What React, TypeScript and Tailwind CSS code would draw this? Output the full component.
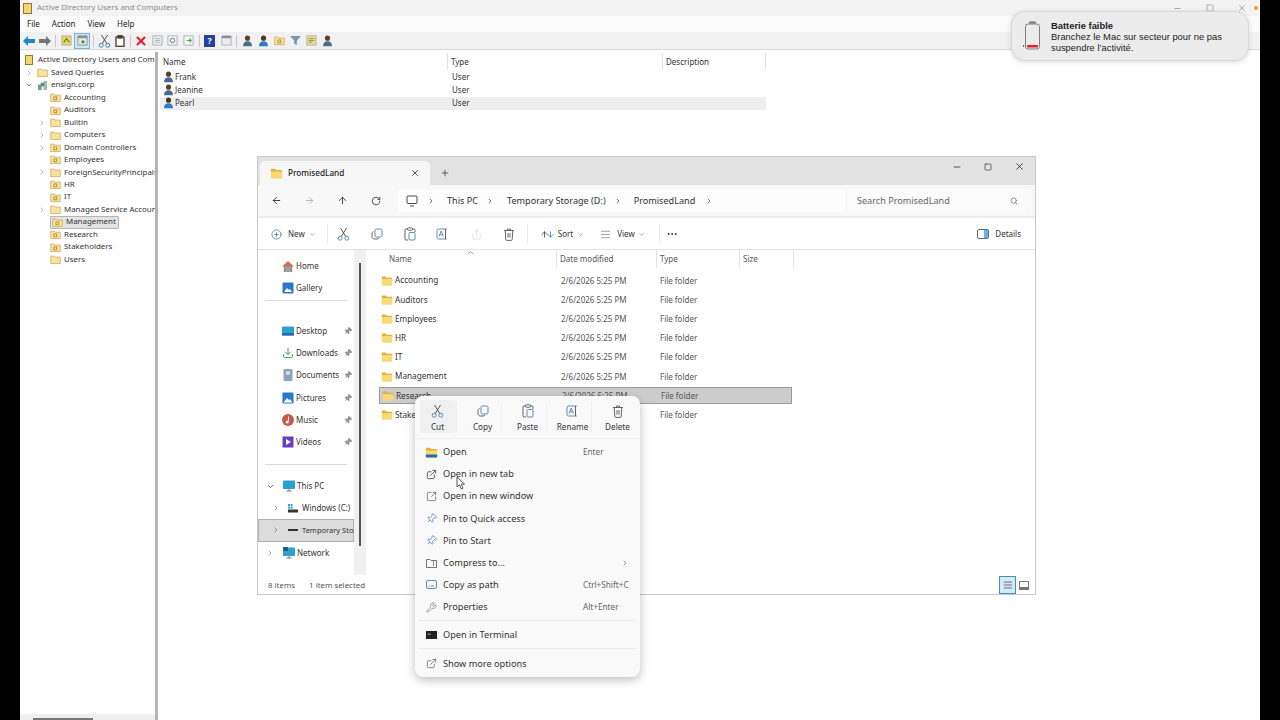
import { ReactNode } from "react";
import {
  ArrowDown,
  ArrowLeft,
  ArrowRight,
  ArrowUp,
  ChevronDown,
  ChevronRight,
  ChevronUp,
  Download,
  Minus,
  MoreHorizontal,
  Pin,
  Plus,
  CirclePlus,
  RotateCw,
  Search,
  Share,
  Square,
  SquareArrowOutUpRight,
  ExternalLink,
  Wrench,
  X,
  AlignJustify,
} from "lucide-react";

const SANS = "font-['Noto_Sans','Open_Sans',sans-serif]";

function Folder({ size = 12, blue }: { size?: number; blue?: boolean }) {
  return (
    <svg width={size} height={size} viewBox="0 0 16 16" className="shrink-0">
      <path d="M1 3.5C1 2.7 1.6 2 2.4 2h3.8l1.6 1.6h5.800c.8 0 1.400.6 1.400 1.400v1H1z" fill="#e0b13c" />
      <path d="M1 5.600h14v7.200c0 .8-.6 1.400-1.400 1.400H2.400c-.8 0-1.400-.6-1.400-1.400z" fill="#f9d976" />
      {blue && <path d="M1 10.500h14v2.300c0 .8-.6 1.400-1.400 1.400H2.400c-.8 0-1.400-.6-1.400-1.400z" fill="#1d6fa8" />}
    </svg>
  );
}

function CutIcon({ color = "#4f7fb5" }: { color?: string }) {
  return (
    <svg width="13" height="14" viewBox="0 0 13 14" fill="none" stroke={color} strokeWidth="0.9" className="shrink-0">
      <circle cx="3.200" cy="11.200" r="2" />
      <circle cx="9.800" cy="11.200" r="2" />
      <path d="M4.300 9.500L9.500 1M8.700 9.500L3.500 1" stroke="#444" />
    </svg>
  );
}

function CopyIcon() {
  return (
    <svg width="12" height="12" viewBox="0 0 12 12" fill="none" strokeWidth="0.9" className="shrink-0">
      <rect x="4" y="1" width="7" height="8" rx="1.500" stroke="#4f7fb5" />
      <path d="M2.500 3.500C1.500 4 1 4.500 1 5.500v3C1 10 2 11 3.500 11h2.500c1 0 1.500-.5 2-1.200" stroke="#555" />
    </svg>
  );
}

function PasteIcon() {
  return (
    <svg width="12" height="14" viewBox="0 0 12 14" fill="none" strokeWidth="0.9" className="shrink-0">
      <path d="M3.500 2H2a1 1 0 00-1 1v9a1 1 0 001 1h2M8.500 2H10a1 1 0 011 1v2" stroke="#555" />
      <rect x="3.500" y="0.800" width="5" height="2.400" rx="0.800" stroke="#555" />
      <rect x="5" y="5.500" width="6" height="7.500" rx="1" stroke="#4f7fb5" />
    </svg>
  );
}

function RenameIcon() {
  return (
    <svg width="13" height="12" viewBox="0 0 13 12" fill="none" strokeWidth="0.9" className="shrink-0">
      <path d="M8 1H2.500A1.500 1.500 0 001 2.500v7A1.500 1.500 0 002.500 11H8" stroke="#4f7fb5" />
      <path d="M3 8.500L5.200 3l2.200 5.500M3.800 6.800h2.800" stroke="#4f7fb5" />
      <path d="M9.500 1v10M8.300 1h2.400M8.300 11h2.400" stroke="#555" />
    </svg>
  );
}

function TrashIcon() {
  return (
    <svg width="12" height="13" viewBox="0 0 12 13" fill="none" stroke="#555" strokeWidth="0.9" className="shrink-0">
      <path d="M1 2.500h10M4.500 2.500V1h3v1.500M2.200 2.500l.6 9a1 1 0 001 .9h4.400a1 1 0 001-.9l.6-9M5 5v4.500M7 5v4.500" />
    </svg>
  );
}

function OuFolder({ plain }: { plain?: boolean }) {
  return (
    <svg width="11" height="11" viewBox="0 0 16 16" className="shrink-0">
      <path d="M1 3h5l1.500 1.500H15V14H1z" fill="#f6e3a1" stroke="#c8a552" strokeWidth="1" />
      {!plain && <rect x="5" y="6.500" width="5.500" height="5.500" fill="#b9922e" />}
      {!plain && <rect x="6.500" y="8" width="2.500" height="2.500" fill="#f8efc8" />}
    </svg>
  );
}

function UserIcon({ blue }: { blue?: boolean }) {
  return (
    <svg width="11" height="12" viewBox="0 0 14 16" className="shrink-0">
      <circle cx="7" cy="4.200" r="3.400" fill={blue ? "#49361f" : "#5a4028"} />
      <path d="M1 15c0-4.400 2.400-6.600 6-6.600s6 2.200 6 6.600z" fill={blue ? "#2f7cc4" : "#4a6a90"} />
    </svg>
  );
}

function TreeRow({
  label,
  depth = 1,
  chevron,
  open,
  selected,
  plain,
  icon,
}: {
  label: string;
  depth?: number;
  chevron?: boolean;
  open?: boolean;
  selected?: boolean;
  plain?: boolean;
  icon?: ReactNode;
}) {
  return (
    <div className="flex h-[12.47px] items-center whitespace-nowrap">
      <span className={depth === 1 ? "w-[17px] shrink-0" : "w-[4px] shrink-0"} />
      <span className="flex w-[10px] shrink-0 items-center justify-center">
        {chevron && (open ? <ChevronDown size={8} strokeWidth={1.5} /> : <ChevronRight size={8} className="text-gray-500" strokeWidth={1.5} />)}
      </span>
      <span className={`ml-[3px] flex items-center gap-[3px] ${selected ? "-mx-[2px] h-[13.500px] rounded-[1px] border border-[#b5b5b5] bg-[#e3e3e3] pl-[1px] pr-[2px]" : ""}`}>
        {icon ?? <OuFolder plain={plain} />}
        <span className="text-[7.900px] text-[#333]">{label}</span>
      </span>
    </div>
  );
}

function MmcToolbar() {
  const sep = <span className="mx-[2.500px] h-[12px] w-px bg-[#c8c8c8]" />;
  const box = (c: string, inner?: ReactNode) => (
    <span className="flex h-[16px] w-[15.600px] items-center justify-center">
      <svg width="11" height="11" viewBox="0 0 12 12">
        <rect x="1" y="1" width="10" height="10" fill={c} stroke="#9aa3ad" strokeWidth="0.8" />
        {inner}
      </svg>
    </span>
  );
  return (
    <div className="flex h-[18px] items-center border-b border-[#d8d8d8] bg-[#f1f1f1] pl-[1.500px]">
      <span className="flex w-[15.600px] justify-center">
        <svg width="12" height="10" viewBox="0 0 12 10"><path d="M0 5l5-5v3h7v4H5v3z" fill="#1f88c9" /></svg>
      </span>
      <span className="flex w-[15.600px] justify-center">
        <svg width="12" height="10" viewBox="0 0 12 10"><path d="M12 5L7 0v3H0v4h7v3z" fill="#757575" /></svg>
      </span>
      {sep}
      {box("#f2d35f", <path d="M3 8l3-4 3 4" stroke="#4a9a3a" strokeWidth="1.400" fill="none" />)}
      <span className="flex h-[16px] w-[16px] items-center justify-center border border-[#7fb2d8] bg-[#cfe6f7]">
        <svg width="11" height="11" viewBox="0 0 12 12">
          <rect x="1" y="1" width="10" height="10" fill="#e8e8e8" stroke="#8a8f94" />
          <rect x="1" y="1" width="10" height="2.500" fill="#8a8f94" />
          <rect x="5" y="6" width="3" height="3" fill="#3d8a3d" />
        </svg>
      </span>
      {sep}
      <span className="flex w-[15.600px] justify-center"><CutIcon color="#2f74c0" /></span>
      <span className="flex w-[15.600px] justify-center">
        <svg width="10" height="12" viewBox="0 0 10 12" fill="#fff" stroke="#4a3f2a" strokeWidth="1.300">
          <rect x="1" y="2" width="8" height="9.300" />
          <rect x="3" y="0.700" width="4" height="2.300" fill="#4a3f2a" />
        </svg>
      </span>
      {sep}
      <span className="flex w-[16px] justify-center"><X size={14} className="text-[#d8262c]" strokeWidth={3.600} /></span>
      {box("#eceff2", <path d="M3 4h6M3 6h6M3 8h6" stroke="#9aa3ad" strokeWidth="0.8" />)}
      {box("#f4f4f4", <circle cx="6" cy="6" r="2.400" stroke="#707070" fill="none" />)}
      {box("#f6f6f6", <path d="M4 6h5M7 4l2 2-2 2" stroke="#58a63c" strokeWidth="1.200" fill="none" />)}
      {sep}
      <span className="ml-[2px] mr-[3px] flex h-[12px] w-[11px] items-center justify-center bg-[#26409b] text-[9px] font-bold leading-none text-white">?</span>
      {box("#ececec", <rect x="1" y="1" width="10" height="2.500" fill="#8a8f94" />)}
      {sep}
      <span className="flex w-[16px] justify-center"><UserIcon /></span>
      <span className="flex w-[16px] justify-center"><UserIcon blue /></span>
      <span className="flex w-[16px] justify-center"><OuFolder /></span>
      <span className="flex w-[16px] justify-center">
        <svg width="11" height="11" viewBox="0 0 12 12"><path d="M0 1h12L7.500 6v5l-3-1.500V6z" fill="#7c97ae" /></svg>
      </span>
      {box("#f2dc8f", <path d="M3 4h6M3 6h6M3 8h4" stroke="#7c8a3a" strokeWidth="0.9" />)}
      <span className="flex w-[16px] justify-center"><UserIcon /></span>
    </div>
  );
}

function MmcWindow() {
  return (
    <div className="flex h-full flex-col bg-white">
      <div className="flex h-4 shrink-0 items-center bg-[#f3f3f3] pl-[3px] pr-[2px]">
        <span className="h-[11px] w-[9px] border border-[#8f7a3a] bg-[#f3d66e]" />
        <span className="ml-[5px] text-[7.900px] text-[#8b8b8b]">Active Directory Users and Computers</span>
        <div className="ml-auto flex items-center text-[#9a9a9a]">
          <Minus size={9} />
          <Square size={8} className="ml-[24px]" />
          <X size={10} className="ml-[23px]" />
          <span className="ml-[7px] h-[4px] w-[4px] rounded-full bg-[#f0a030]" />
        </div>
      </div>
      <div className="flex h-4 shrink-0 items-center gap-[12px] bg-[#fbfbfb] pl-[7px] text-[8px] text-[#222]">
        <span>File</span><span>Action</span><span>View</span><span>Help</span>
      </div>
      <MmcToolbar />
      <div className="flex min-h-0 flex-1 pt-[2px]">
        <div className="flex w-[135px] shrink-0 flex-col overflow-hidden">
          <div className="flex-1 overflow-hidden pt-[2px]">
            <div className="flex h-[12.470px] items-center whitespace-nowrap pl-[5px]">
              <span className="mr-[5px] h-[10px] w-[8px] shrink-0 border border-[#8f7a3a] bg-[#f3d66e]" />
              <span className="text-[7.900px] text-[#333]">Active Directory Users and Com</span>
            </div>
            <TreeRow depth={0} chevron plain label="Saved Queries" />
            <TreeRow
              depth={0}
              chevron
              open
              label="ensign.corp"
              icon={
                <svg width="11" height="11" viewBox="0 0 12 12" className="shrink-0">
                  <rect x="1" y="5" width="4" height="6" fill="#7d9a8a" />
                  <rect x="7" y="1" width="4" height="10" fill="#a9bcb2" />
                  <rect x="4" y="3" width="4" height="4" fill="#5f8f70" />
                </svg>
              }
            />
            <TreeRow label="Accounting" />
            <TreeRow label="Auditors" />
            <TreeRow chevron plain label="Builtin" />
            <TreeRow chevron plain label="Computers" />
            <TreeRow chevron label="Domain Controllers" />
            <TreeRow label="Employees" />
            <TreeRow chevron plain label="ForeignSecurityPrincipals" />
            <TreeRow label="HR" />
            <TreeRow label="IT" />
            <TreeRow chevron plain label="Managed Service Accounts" />
            <TreeRow selected label="Management" />
            <TreeRow label="Research" />
            <TreeRow label="Stakeholders" />
            <TreeRow plain label="Users" />
          </div>
          <div className="flex h-[6px] shrink-0 items-end bg-[#efefef] pl-[13px]">
            <span className="h-[2px] w-[60px] bg-[#777]" />
          </div>
        </div>
        <div className="w-[3px] shrink-0 bg-[#b4b4b4]" />
        <div className="min-w-0 flex-1 pl-[2px]">
          <div className="flex h-[18px] w-[608px] items-center text-[8px] text-[#333]">
            <span className="w-[288px] border-r border-[#e2e2e2] pl-[3px] leading-[17px]">Name</span>
            <span className="w-[215px] border-r border-[#e2e2e2] pl-[3px] leading-[17px]">Type</span>
            <span className="w-[103px] border-r border-[#e2e2e2] pl-[3px] leading-[17px]">Description</span>
          </div>
          {[
            { name: "Frank" },
            { name: "Jeanine" },
            { name: "Pearl", sel: true },
          ].map((r) => (
            <div key={r.name} className={`flex h-[13.300px] w-[606px] items-center text-[8px] text-[#333] ${r.sel ? "bg-[#eeeeee]" : ""}`}>
              <span className="flex w-[288px] items-center gap-[1px] pl-[3px]">
                <UserIcon blue={r.sel} />
                {r.name}
              </span>
              <span className="pl-[4px]">User</span>
            </div>
          ))}
        </div>
      </div>
    </div>
  );
}

function NavIcon({ kind }: { kind: string }) {
  if (kind === "Downloads") return <Download size={12} className="text-[#2fa84f]" />;
  return (
    <svg width="12" height="12" viewBox="0 0 12 12" className="shrink-0">
      {kind === "Gallery" && (
        <>
          <rect x="0.500" y="0.500" width="11" height="11" rx="1" fill="#2a78c8" />
          <path d="M2 10l3-4 2 2 1-1 2 3z" fill="#fff" />
        </>
      )}
      {kind === "Desktop" && (
        <>
          <rect x="0" y="1.500" width="12" height="9" rx="0.800" fill="#2f9fd0" />
          <rect x="0" y="8" width="12" height="2.500" fill="#1c6f9f" />
        </>
      )}
      {kind === "Documents" && (
        <>
          <rect x="1.500" y="0" width="9" height="12" rx="0.800" fill="#8fa3b8" />
          <rect x="4" y="2.500" width="4" height="3" fill="#dfe6ee" />
        </>
      )}
      {kind === "Pictures" && (
        <>
          <rect x="0.500" y="0.500" width="11" height="11" rx="0.800" fill="#2a78c8" />
          <path d="M1.500 10.500l3.500-4.500 2 2 1-1 2.500 3.500z" fill="#fff" />
        </>
      )}
      {kind === "Music" && (
        <>
          <circle cx="6" cy="6" r="6" fill="#c8564a" />
          <path d="M6.500 2.500v5" stroke="#fff" strokeWidth="1" />
          <circle cx="5.200" cy="8" r="1.500" fill="#fff" />
        </>
      )}
      {kind === "Videos" && (
        <>
          <rect x="0.500" y="0.500" width="11" height="11" fill="#6a3cc0" />
          <path d="M4 3l5 3-5 3z" fill="#fff" />
        </>
      )}
      {(kind === "PC" || kind === "Network") && (
        <>
          <rect x="0" y="0.500" width="12" height="8.500" rx="0.800" fill="#2f9fd0" />
          <path d="M3.500 11h5M6 9v2" stroke="#777" strokeWidth="1" />
          {kind === "Network" && <rect x="0" y="0" width="5" height="4" fill="#1c5f8f" />}
        </>
      )}
    </svg>
  );
}

function NavRow({ children, pl, sel }: { children: ReactNode; pl: number; sel?: boolean }) {
  return (
    <div
      className={`flex h-[22.200px] items-center whitespace-nowrap text-[8px] text-[#333] ${sel ? "border border-[#b0b0b0] bg-[#dcdcdc]" : ""}`}
      style={{ paddingLeft: pl }}
    >
      {children}
    </div>
  );
}

const files = ["Accounting", "Auditors", "Employees", "HR", "IT", "Management", "Research", "Stakeholders"];
const pinned = ["Desktop", "Downloads", "Documents", "Pictures", "Music", "Videos"];

function Explorer() {
  return (
    <div className={`absolute left-[257px] top-[156px] flex h-[439px] w-[779px] flex-col border border-[#c8c8c8] bg-white ${SANS}`}>
      {/* tabs */}
      <div className="flex h-[28px] shrink-0 items-end bg-[#e3e3e3] pl-[2px]">
        <div className="flex h-[24px] w-[170px] items-center rounded-t-[5px] bg-[#f7f7f7] pl-[10px]">
          <Folder size={13} />
          <span className="ml-[5px] text-[8.200px] font-medium text-[#222]">PromisedLand</span>
          <X size={10} className="ml-auto mr-[10px] text-[#333]" />
        </div>
        <Plus size={10} className="mb-[7px] ml-[10px] text-[#444]" />
        <div className="mb-[13px] ml-auto flex items-center text-[#333]">
          <Minus size={10} />
          <Square size={8} className="ml-[22px]" />
          <X size={11} className="ml-[22px] mr-[10px]" />
        </div>
      </div>
      {/* address row */}
      <div className="flex h-[33px] shrink-0 items-center border-b-2 border-[#ececec] bg-[#f8f8f8] text-[9.100px] text-[#333]">
        <ArrowLeft size={11} className="ml-[13px]" />
        <ArrowRight size={11} className="ml-[22px] text-[#b5b5b5]" />
        <ArrowUp size={11} className="ml-[22px]" />
        <RotateCw size={10} className="ml-[23px]" />
        <div className="ml-[17px] flex h-[22px] w-[447px] items-center bg-[#fdfdfd] pl-[8px]">
          <svg width="12" height="12" viewBox="0 0 12 12" fill="none" stroke="#333" strokeWidth="0.9">
            <rect x="1" y="1" width="10" height="7.500" rx="1" />
            <path d="M4 11h4" />
          </svg>
          <ChevronRight size={8} className="ml-[9px]" />
          <span className="ml-[12px]">This PC</span>
          <ChevronRight size={8} className="ml-[8px]" />
          <span className="ml-[13px]">Temporary Storage (D:)</span>
          <ChevronRight size={8} className="ml-[8px]" />
          <span className="ml-[12px]">PromisedLand</span>
          <ChevronRight size={8} className="ml-[10px]" />
        </div>
        <div className="ml-[3px] flex h-[22px] w-[177px] items-center bg-[#fbfbfb] pl-[9px] text-[#666]">
          Search PromisedLand
          <Search size={8} className="ml-auto mr-[7px]" />
        </div>
      </div>
      {/* command bar */}
      <div className="flex h-[32px] shrink-0 items-center border-b border-[#e3e3e3] pt-[1.500px] text-[8px] text-[#333]">
        <CirclePlus size={11} className="ml-[13px] text-[#1f5f9e]" strokeWidth={1.400} />
        <span className="ml-[6px]">New</span>
        <ChevronDown size={7} className="ml-[4px] text-gray-500" />
        <span className="ml-[11px] h-[20px] w-px bg-[#ececec]" />
        <span className="ml-[9px] flex w-[13px] justify-center"><CutIcon /></span>
        <span className="ml-[21px] flex w-[12px] justify-center"><CopyIcon /></span>
        <span className="ml-[21px] flex w-[12px] justify-center"><PasteIcon /></span>
        <span className="ml-[21px] flex w-[12px] justify-center"><RenameIcon /></span>
        <Share size={11} className="ml-[22px] text-[#bcd0e4]" strokeWidth={1.200} />
        <span className="ml-[21px] flex w-[12px] justify-center"><TrashIcon /></span>
        <span className="ml-[12px] h-[20px] w-px bg-[#ececec]" />
        <ArrowUp size={9} className="ml-[12px] -mr-[3px] text-[#333]" />
        <ArrowDown size={9} className="text-[#2a78c8]" />
        <span className="ml-[3px]">Sort</span>
        <ChevronDown size={7} className="ml-[4px] text-gray-500" />
        <AlignJustify size={11} className="ml-[16px] text-[#555]" strokeWidth={1.200} />
        <span className="ml-[6px]">View</span>
        <ChevronDown size={7} className="ml-[3px] text-gray-500" />
        <span className="ml-[14px] h-[20px] w-px bg-[#ececec]" />
        <MoreHorizontal size={12} className="ml-[6px]" />
        <svg width="12" height="10" viewBox="0 0 12 10" className="ml-auto" fill="none">
          <rect x="0.500" y="0.500" width="11" height="9" rx="1.500" stroke="#444" strokeWidth="0.8" />
          <rect x="7" y="1" width="4" height="8" fill="#62b4e8" />
        </svg>
        <span className="ml-[6px] mr-[14px]">Details</span>
      </div>
      {/* body */}
      <div className="flex min-h-0 flex-1">
        <div className="w-[96px] shrink-0 overflow-hidden pt-[5px]">
          <NavRow pl={24}>
            <svg width="12" height="11" viewBox="0 0 12 11" className="mr-[2px]">
              <path d="M6 0L0 5.500h1.800V11h8.400V5.500H12z" fill="#c9764a" />
              <rect x="3" y="5.500" width="6" height="5.500" fill="#8aa6bd" />
            </svg>
            Home
          </NavRow>
          <NavRow pl={24}>
            <span className="mr-[2px]"><NavIcon kind="Gallery" /></span>
            Gallery
          </NavRow>
          <div className="mx-[7px] mt-[1px] h-px bg-[#dcdcdc]" />
          <div className="h-[9.500px]" />
          <div className="h-[9px]" />
          {pinned.map((n) => (
            <div key={n} className="flex h-[22.200px] items-center text-[8px] text-[#333]">
              <span className="ml-[24px] mr-[2px] flex w-[12px] justify-center">
                <NavIcon kind={n} />
              </span>
              <span className="w-[48px] whitespace-nowrap">{n}</span>
              <Pin size={8} className="rotate-45 text-[#777]" fill="#999" />
            </div>
          ))}
          <div className="mx-[7px] mt-[11px] h-px bg-[#dcdcdc]" />
          <div className="h-[10px]" />
          <NavRow pl={8}>
            <ChevronDown size={9} className="mr-[8px]" />
            <span className="mr-[2px]"><NavIcon kind="PC" /></span>
            This PC
          </NavRow>
          <NavRow pl={14}>
            <ChevronRight size={8} className="mr-[8px] text-gray-500" />
            <svg width="10" height="9" viewBox="0 0 10 9" className="mr-[4px]">
              <rect x="0" y="5.500" width="10" height="3" fill="#333" />
              <rect x="0" y="0" width="2" height="2" fill="#2a9fd8" />
              <rect x="2.600" y="0" width="2" height="2" fill="#2a9fd8" />
              <rect x="0" y="2.600" width="2" height="2" fill="#2a9fd8" />
              <rect x="2.600" y="2.600" width="2" height="2" fill="#2a9fd8" />
            </svg>
            Windows (C:)
          </NavRow>
          <NavRow pl={13} sel>
            <ChevronRight size={8} className="mr-[8px] shrink-0 text-gray-500" />
            <span className="mr-[4px] block h-[2px] w-[10px] shrink-0 bg-[#333]" />
            <span className="text-[7.500px]">Temporary Sto</span>
          </NavRow>
          <NavRow pl={8}>
            <ChevronRight size={8} className="mr-[9px] text-gray-500" />
            <span className="mr-[2px]"><NavIcon kind="Network" /></span>
            Network
          </NavRow>
        </div>
        <div className="flex w-[12px] shrink-0 justify-center bg-[#f0f0f0] pb-[30px] pt-[13px]">
          <span className="h-[283px] w-[2px] bg-[#555]" />
        </div>
        <div className="min-w-0 flex-1">
          <div className="relative flex h-[18px] w-[428px] items-center text-[8px] text-[#555]">
            <ChevronUp size={9} className="absolute -top-[2px] left-[100px] text-[#777]" />
            <span className="w-[191px] border-r border-[#e3e3e3] pl-[23px] leading-[18px]">Name</span>
            <span className="w-[100px] border-r border-[#e3e3e3] pl-[3px] leading-[18px]">Date modified</span>
            <span className="w-[83px] border-r border-[#e3e3e3] pl-[3px] leading-[18px]">Type</span>
            <span className="w-[54px] border-r border-[#e3e3e3] pl-[3px] leading-[18px]">Size</span>
          </div>
          <div className="pt-[3px]">
            {files.map((f) => {
              const sel = f === "Research";
              return (
                <div key={f} className="flex h-[19.200px] items-center">
                  <div className={`ml-[13px] flex h-[17px] w-[413px] items-center text-[8.200px] ${sel ? "border border-[#9a9a9a] bg-[#cdcdcd]" : ""}`}>
                    <span className="ml-[2px] flex w-[14px]"><Folder size={12} /></span>
                    <span className="w-[166px] text-[#333]">{f}</span>
                    <span className="w-[99px] text-[8px] text-[#555]">2/6/2026 5:25 PM</span>
                    <span className="text-[8px] text-[#555]">File folder</span>
                  </div>
                </div>
              );
            })}
          </div>
        </div>
      </div>
      {/* status bar */}
      <div className="flex h-[19px] shrink-0 items-center pt-[2px] text-[7.900px] text-[#555]">
        <span className="ml-[10px]">8 items</span>
        <span className="ml-[14px]">1 item selected</span>
        <span className="ml-auto flex h-[18px] w-[17px] -translate-y-[1px] items-center justify-center border border-[#4c8cb0] bg-[#d3eaf7]">
          <AlignJustify size={10} className="text-[#555]" />
        </span>
        <span className="ml-[3px] mr-[6px] block h-[9px] w-[10px] border-[1.500px] border-b-[3px] border-[#777]" />
      </div>
    </div>
  );
}

const quick = [
  { label: "Cut", icon: <CutIcon />, hover: true },
  { label: "Copy", icon: <CopyIcon /> },
  { label: "Paste", icon: <PasteIcon /> },
  { label: "Rename", icon: <RenameIcon /> },
  { label: "Delete", icon: <TrashIcon /> },
];

function MenuRow({ icon, label, shortcut, arrow }: { icon: ReactNode; label: string; shortcut?: string; arrow?: boolean }) {
  return (
    <div className="flex h-[22.150px] items-center text-[9.200px] text-[#333]">
      <span className="ml-[10px] flex w-[12px] justify-center text-[#555]">{icon}</span>
      <span className="ml-[6px] w-[140px] whitespace-nowrap">{label}</span>
      {shortcut && <span className="text-[8.200px] text-[#666]">{shortcut}</span>}
      {arrow && <ChevronRight size={8} className="ml-[38px] text-[#666]" />}
    </div>
  );
}

function ContextMenu() {
  return (
    <div className={`absolute left-[415px] top-[396px] w-[225px] rounded-[8px] bg-[#f9f9f9] pt-[4px] shadow-[0_3px_10px_rgba(0,0,0,0.25)] ${SANS}`}>
      <div className="flex h-[38px] items-stretch">
        {quick.map((q, i) => (
          <div key={q.label} className="flex w-[45px] justify-center">
            <div className={`flex w-[36px] flex-col items-center pt-[4px] ${q.hover ? "h-[33px] rounded-[3px] bg-[#f0f0f0]" : ""}`}>
              <span className="flex h-[14px] items-center">{q.icon}</span>
              <span className="mt-[3px] text-[8.200px] text-[#333]">{q.label}</span>
            </div>
            {i < 4 && <span className="-mr-px mt-[2px] h-[30px] w-px self-start bg-[#f1f1f1]" />}
          </div>
        ))}
      </div>
      <div className="h-px bg-[#eeeeee]" />
      <div className="h-[2px]" />
      <MenuRow icon={<Folder size={13} blue />} label="Open" shortcut="Enter" />
      <MenuRow icon={<ExternalLink size={11} />} label="Open in new tab" />
      <MenuRow icon={<SquareArrowOutUpRight size={11} strokeWidth={1.500} />} label="Open in new window" />
      <MenuRow icon={<Pin size={11} className="rotate-45 text-[#3d6ea8]" strokeWidth={1.400} />} label="Pin to Quick access" />
      <MenuRow icon={<Pin size={11} className="rotate-45 text-[#3d6ea8]" strokeWidth={1.400} />} label="Pin to Start" />
      <MenuRow
        icon={
          <svg width="11" height="10" viewBox="0 0 11 10" fill="none" stroke="#555" strokeWidth="0.8">
            <path d="M.5 1.500h3.500l1 1h5.500v7H.5z" />
            <path d="M7.500 3v5" stroke="#3d6ea8" />
          </svg>
        }
        label="Compress to..."
        arrow
      />
      <MenuRow
        icon={
          <svg width="11" height="9" viewBox="0 0 11 9" fill="none" stroke="#3d6ea8" strokeWidth="0.8">
            <rect x=".5" y=".5" width="10" height="8" rx="1.500" />
            <path d="M2.500 6h1M5 6h3" stroke="#555" />
          </svg>
        }
        label="Copy as path"
        shortcut="Ctrl+Shift+C"
      />
      <MenuRow icon={<Wrench size={11} strokeWidth={1.200} />} label="Properties" shortcut="Alt+Enter" />
      <div className="mx-[4px] mt-[2px] h-px bg-[#eaeaea]" />
      <div className="h-[2.500px]" />
      <MenuRow
        icon={<span className="block h-[8px] w-[11px] bg-[#222]"><span className="ml-[2px] block text-[6px] leading-[7px] text-white">&gt;</span></span>}
        label="Open in Terminal"
      />
      <div className="mx-[4px] mt-[2px] h-px bg-[#eaeaea]" />
      <div className="h-[4px]" />
      <MenuRow icon={<ExternalLink size={11} strokeWidth={1.500} />} label="Show more options" />
      <div className="h-[2px]" />
    </div>
  );
}

function BatteryNotice() {
  return (
    <div className="absolute left-[1011px] top-[11px] flex h-[50px] w-[238px] items-center rounded-[14px] border border-[#d8d8d8] bg-[#ececec] font-['Liberation_Sans',Arial,sans-serif] shadow-[0_1px_5px_rgba(0,0,0,0.15)]">
      <svg width="17" height="30" viewBox="0 0 17 30" className="ml-[12px] shrink-0 overflow-visible" fill="none">
        <rect x="5" y="0.500" width="7" height="2" rx="1" fill="#777" />
        <rect x="1.500" y="3" width="14" height="25" rx="2.500" stroke="#666" strokeWidth="0.8" />
        <rect x="3" y="24" width="11" height="2.500" rx="0.800" fill="#d8262c" />
        <path d="M-1 24l1.500 1-1.500 1z" fill="#222" />
      </svg>
      <div className="ml-[10px] text-[9.400px] leading-[11px] text-[#222]">
        <div className="font-bold">Batterie faible</div>
        <div>Branchez le Mac sur secteur pour ne pas</div>
        <div>suspendre l’activité.</div>
      </div>
    </div>
  );
}

export default function App() {
  return (
    <div className={`relative flex h-[720px] w-[1280px] overflow-hidden bg-black ${SANS}`}>
      <div className="ml-5 h-full w-[1240px]">
        <MmcWindow />
      </div>
      <Explorer />
      <ContextMenu />
      <BatteryNotice />
      {/* mouse pointer */}
      <svg width="10" height="14" viewBox="0 0 10 14" className="absolute left-[456px] top-[476px]">
        <path d="M1 1v10l2.500-2.200L5.200 13l1.800-.8-1.700-4H8.500z" fill="#fff" stroke="#555" strokeWidth="1" />
      </svg>
    </div>
  );
}
